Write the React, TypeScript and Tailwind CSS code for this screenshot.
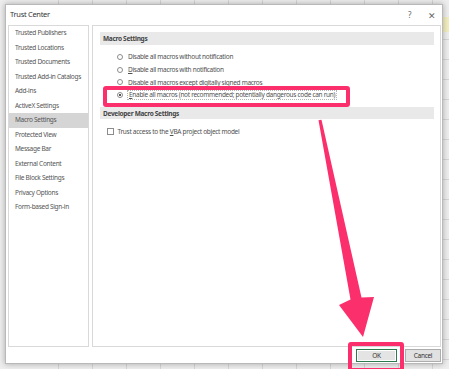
import { Fragment } from "react";

const navItems = [
  "Trusted Publishers",
  "Trusted Locations",
  "Trusted Documents",
  "Trusted Add-in Catalogs",
  "Add-ins",
  "ActiveX Settings",
  "Macro Settings",
  "Protected View",
  "Message Bar",
  "External Content",
  "File Block Settings",
  "Privacy Options",
  "Form-based Sign-in",
];

const Radio = ({ checked }: { checked?: boolean }) => (
  <span className="w-[6px] h-[6px] rounded-full border border-[#8c8c8c] bg-white flex items-center justify-center shrink-0">
    {checked && <span className="w-[2.5px] h-[2.5px] rounded-full bg-[#222]" />}
  </span>
);

const SectionHeader = ({ label, h }: { label: string; h: string }) => (
  <div className={`bg-[#e9e9ea] ${h} flex items-center pl-[3px] text-[6.5px] font-bold text-[#444]`}>{label}</div>
);

export default function App() {
  return (
    <div className="w-[449px] h-[369px] relative overflow-hidden bg-[#eeeeee] tracking-[-0.3px]" style={{ fontFamily: '"Noto Sans", "Open Sans", sans-serif' }}>
      {/* excel backdrop */}
      <div className="absolute inset-0 grid grid-cols-[repeat(14,34px)] grid-rows-[repeat(19,20px)] pl-[25px]">
        {Array.from({ length: 14 * 19 }).map((_, i) => (
          <div key={i} className="border-r border-b border-[#d6d6d6]" />
        ))}
      </div>
      <div className="absolute right-0 top-[17px] w-[6px] h-[15px] bg-[#f3eec0]" />

      {/* dialog window */}
      <div className="absolute left-[5px] top-[4px] w-[438px] h-[360px] bg-white border border-[#b9b9b9] shadow-[0_0_6px_rgba(0,0,0,0.3)] flex flex-col">
        <div className="h-[20px] shrink-0 flex items-center justify-between pl-[4px] pr-[6px] text-[7.5px] text-[#333]">
          <span>Trust Center</span>
          <div className="flex items-center gap-[17px] text-[#666]">
            <span className="text-[8px]">?</span>
            <span className="text-[9px] leading-none">✕</span>
          </div>
        </div>

        <div className="h-[322px] shrink-0 flex gap-[3px] pl-[2px] pr-[1px]">
          <div className="w-[81px] border border-[#d9d9d9] flex flex-col">
            {navItems.map((item) => (
              <div key={item} className={`h-[14.5px] shrink-0 flex items-center pl-[6px] text-[6.5px] text-[#555] whitespace-nowrap ${item === "Macro Settings" ? "bg-[#d5d5d5]" : ""}`}>
                {item}
              </div>
            ))}
          </div>

          <div className="flex-1 border border-[#d9d9d9] pt-[6px] pl-[7px] pr-[6px] flex flex-col text-[6.5px] text-[#505050]">
            <SectionHeader label="Macro Settings" h="h-[13px]" />
            <div className="mt-[6px] flex flex-col pl-[17px]">
              {[
                <Fragment>Disable all macros without notification</Fragment>,
                <Fragment><u>D</u>isable all macros with notification</Fragment>,
                <Fragment>Disable all macros except digitally signed macros</Fragment>,
              ].map((label, i) => (
                <div key={i} className="h-[12.6px] flex items-center gap-[5px] whitespace-nowrap">
                  <Radio />
                  <span>{label}</span>
                </div>
              ))}
              <div className="h-[12.6px] flex items-center gap-[4px] whitespace-nowrap">
                <Radio checked />
                <span className="border border-dotted border-[#b5b5b5] px-[1px] leading-[8px]">
                  <u>E</u>nable all macros (not recommended; potentially dangerous code can run)
                </span>
              </div>
            </div>

            <div className="mt-[6px]">
              <SectionHeader label="Developer Macro Settings" h="h-[12px]" />
            </div>
            <div className="mt-[6px] h-[12px] flex items-center gap-[4px] pl-[7px] whitespace-nowrap">
              <span className="w-[6.5px] h-[6.5px] border border-[#8c8c8c] bg-white shrink-0" />
              <span>
                Trust access to the <u>V</u>BA project object model
              </span>
            </div>
          </div>
        </div>

        <div className="flex-1 flex items-start justify-end gap-[8px] pt-[2px] pr-[1px] text-[6.5px] text-[#333]">
          <button className="w-[41px] h-[13px] bg-[#e4e4e4] border border-[#2f7a4d] shadow-[inset_0_0_0_1px_#ffffff] flex items-center justify-center">OK</button>
          <button className="w-[36px] h-[13px] bg-[#e1e1e1] border border-[#adadad] flex items-center justify-center">Cancel</button>
        </div>
      </div>

      {/* annotations */}
      <div className="absolute left-[103px] top-[86px] w-[247px] h-[21px] border-[4px] border-[#fb2f6c] rounded-[3px]" />
      <div className="absolute left-[348px] top-[342px] w-[56px] h-[30px] border-[4px] border-[#fb2f6c] rounded-[3px]" />
      <svg className="absolute left-0 top-0" width="449" height="369" viewBox="0 0 449 369">
        <polygon points="318.5,120.3 321.5,119.7 361.5,297.5 374,297 363,337 339,305 350.5,299.5" fill="#fb2f6c" />
      </svg>
    </div>
  );
}
